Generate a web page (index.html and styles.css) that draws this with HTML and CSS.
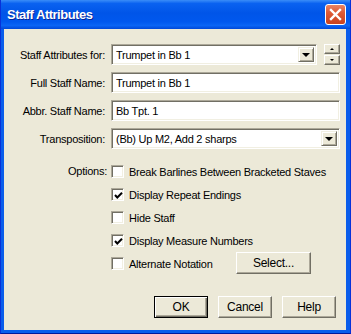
FILE: index.html
```html
<!DOCTYPE html>
<html lang="en">
<head>
    <meta charset="UTF-8">
    <title>Staff Attributes</title>
    <link rel="stylesheet" href="styles.css">
</head>
<body>
    <div class="window">
        <!-- Title bar -->
        <div class="titlebar">
            <span class="title">Staff Attributes</span>
            <span class="close">
                <svg width="13" height="13" viewBox="0 0 13 13">
                    <path d="M2 2 L11 11 M11 2 L2 11" stroke="#fff" stroke-width="2.4" stroke-linecap="square"/>
                </svg>
            </span>
        </div>

        <!-- Dialog body -->
        <div class="client">
            <div class="form">
                <span class="lbl">Staff Attributes for:</span>
                <div class="ctl first-row">
                    <div class="combo combo-short">
                        <span class="val">Trumpet in Bb 1</span>
                        <span class="drop"><i class="arrow"></i></span>
                    </div>
                    <div class="spin">
                        <span class="spin-btn"><i class="tri-up"></i></span>
                        <span class="spin-btn"><i class="tri-down"></i></span>
                    </div>
                </div>

                <span class="lbl">Full Staff Name:</span>
                <div class="field">Trumpet in Bb 1</div>

                <span class="lbl">Abbr. Staff Name:</span>
                <div class="field">Bb Tpt. 1</div>

                <span class="lbl">Transposition:</span>
                <div class="combo">
                    <span class="val">(Bb) Up M2, Add 2 sharps</span>
                    <span class="drop"><i class="arrow"></i></span>
                </div>
            </div>

            <div class="options">
                <span class="lbl opt-lbl">Options:</span>
                <div class="checks">
                    <div class="check-row">
                        <span class="box"></span>
                        <span>Break Barlines Between Bracketed Staves</span>
                    </div>
                    <div class="check-row">
                        <span class="box"><svg width="9" height="9" viewBox="0 0 9 9"><path d="M1 4 L3.3 6.5 L8 1.8" fill="none" stroke="#000" stroke-width="2"/></svg></span>
                        <span>Display Repeat Endings</span>
                    </div>
                    <div class="check-row">
                        <span class="box"></span>
                        <span>Hide Staff</span>
                    </div>
                    <div class="check-row">
                        <span class="box"><svg width="9" height="9" viewBox="0 0 9 9"><path d="M1 4 L3.3 6.5 L8 1.8" fill="none" stroke="#000" stroke-width="2"/></svg></span>
                        <span>Display Measure Numbers</span>
                    </div>
                    <div class="check-row">
                        <span class="box"></span>
                        <span class="check-text">Alternate Notation</span>
                        <span class="btn select-btn">Select...</span>
                    </div>
                </div>
            </div>

            <div class="buttons">
                <span class="btn default">OK</span>
                <span class="btn">Cancel</span>
                <span class="btn">Help</span>
            </div>
        </div>
    </div>
</body>
</html>
```

FILE: styles.css
```css
/* Basic page */
body {
    margin: 0;
    font-family: "Liberation Sans", Arial, sans-serif;
    font-size: 11px;
    letter-spacing: -0.25px;
    color: #000;
    background: #fff;
}

/* Window frame */
.window {
    width: 351px;
    height: 334px;
    box-sizing: border-box;
    display: flex;
    flex-direction: column;
    background: #0A5DEB;
    border: 1px solid #0831D9;
    border-top: 0;
    border-bottom-color: #001A9C;
}

.titlebar {
    height: 29px;
    flex: none;
    display: flex;
    align-items: center;
    padding-left: 6px;
    background: linear-gradient(to bottom, #3A8DF8 0%, #0A62F0 12%, #0055E8 45%, #0058EE 75%, #0A65F5 88%, #0048D8 100%);
}

.title {
    color: #fff;
    font-size: 13px;
    font-weight: bold;
    letter-spacing: -0.5px;
    text-shadow: 1px 1px #0B2696;
    padding-bottom: 1px;
}

.close {
    margin-left: auto;
    margin-right: 4px;
    width: 21px;
    height: 21px;
    box-sizing: border-box;
    border: 1px solid #fff;
    border-radius: 3px;
    background: linear-gradient(to bottom, #E98565 0%, #DE5A36 40%, #C9421E 100%);
    display: flex;
    align-items: center;
    justify-content: center;
}

.client {
    flex: 1;
    margin: 0 4px 3px 3px;
    background: #ECE9D8;
    display: flex;
    flex-direction: column;
}

/* Top form */
.form {
    display: grid;
    grid-template-columns: 101px 1fr;
    column-gap: 6px;
    row-gap: 7px;
    padding: 15px 10px 0 0;
    align-items: center;
}

.lbl {
    text-align: right;
    white-space: nowrap;
}

.first-row {
    display: flex;
    align-items: center;
}

.field,
.combo {
    height: 21px;
    box-sizing: border-box;
    background: #fff;
    border: 1px solid;
    border-color: #ACA899 #fff #fff #ACA899;
    box-shadow: inset 1px 1px #716F64, inset -1px -1px #F1EFE2;
    display: flex;
    align-items: center;
    padding-left: 4px;
    white-space: nowrap;
}

.combo {
    padding: 2px 2px 2px 4px;
}

.combo-short {
    width: 206px;
}

.val {
    flex: 1;
}

.drop {
    width: 16px;
    height: 15px;
    box-sizing: border-box;
    background: #ECE9D8;
    border: 1px solid;
    border-color: #F1EFE2 #716F64 #716F64 #F1EFE2;
    box-shadow: inset 1px 1px #fff, inset -1px -1px #ACA899;
    display: flex;
    align-items: center;
    justify-content: center;
}

.arrow {
    width: 0;
    height: 0;
    border-left: 4px solid transparent;
    border-right: 4px solid transparent;
    border-top: 4px solid #000;
    margin-top: 1px;
}

/* Spinner beside first combo */
.spin {
    margin-left: 7px;
    display: flex;
    flex-direction: column;
    gap: 1px;
}

.spin-btn {
    width: 16px;
    height: 10px;
    box-sizing: border-box;
    background: #ECE9D8;
    border: 1px solid;
    border-color: #fff #716F64 #716F64 #fff;
    box-shadow: inset -1px -1px #ACA899;
    display: flex;
    align-items: center;
    justify-content: center;
}

.tri-up,
.tri-down {
    width: 0;
    height: 0;
    border-left: 2px solid transparent;
    border-right: 2px solid transparent;
}

.tri-up {
    border-bottom: 2px solid #000;
}

.tri-down {
    border-top: 2px solid #000;
}

/* Options */
.options {
    display: grid;
    grid-template-columns: 103px 1fr;
    column-gap: 4px;
    margin-top: 11px;
}

.opt-lbl {
    line-height: 23px;
}

.check-row {
    height: 23px;
    display: flex;
    align-items: center;
}

.box {
    width: 13px;
    height: 13px;
    box-sizing: border-box;
    background: #fff;
    border: 1px solid;
    border-color: #ACA899 #fff #fff #ACA899;
    box-shadow: inset 1px 1px #716F64, inset -1px -1px #F1EFE2;
    margin-right: 5px;
    display: flex;
    align-items: center;
    justify-content: center;
}

.box svg {
    margin: 1px 0 0 1px;
}

.check-text {
    width: 107px;
}

/* Push buttons */
.btn {
    width: 54px;
    height: 22px;
    box-sizing: border-box;
    background: #ECE9D8;
    border: 1px solid;
    border-color: #fff #716F64 #716F64 #fff;
    box-shadow: inset -1px -1px #ACA899;
    display: flex;
    align-items: center;
    justify-content: center;
    font-size: 12px;
}

.btn.default {
    border-color: #000;
    box-shadow: inset 1px 1px #fff, inset -1px -1px #716F64, inset -2px -2px #ACA899;
}

.select-btn {
    width: 75px;
    margin-top: -1px;
}

.buttons {
    margin-top: auto;
    display: flex;
    justify-content: flex-end;
    gap: 10px;
    padding: 0 10px 12px 0;
}
```
